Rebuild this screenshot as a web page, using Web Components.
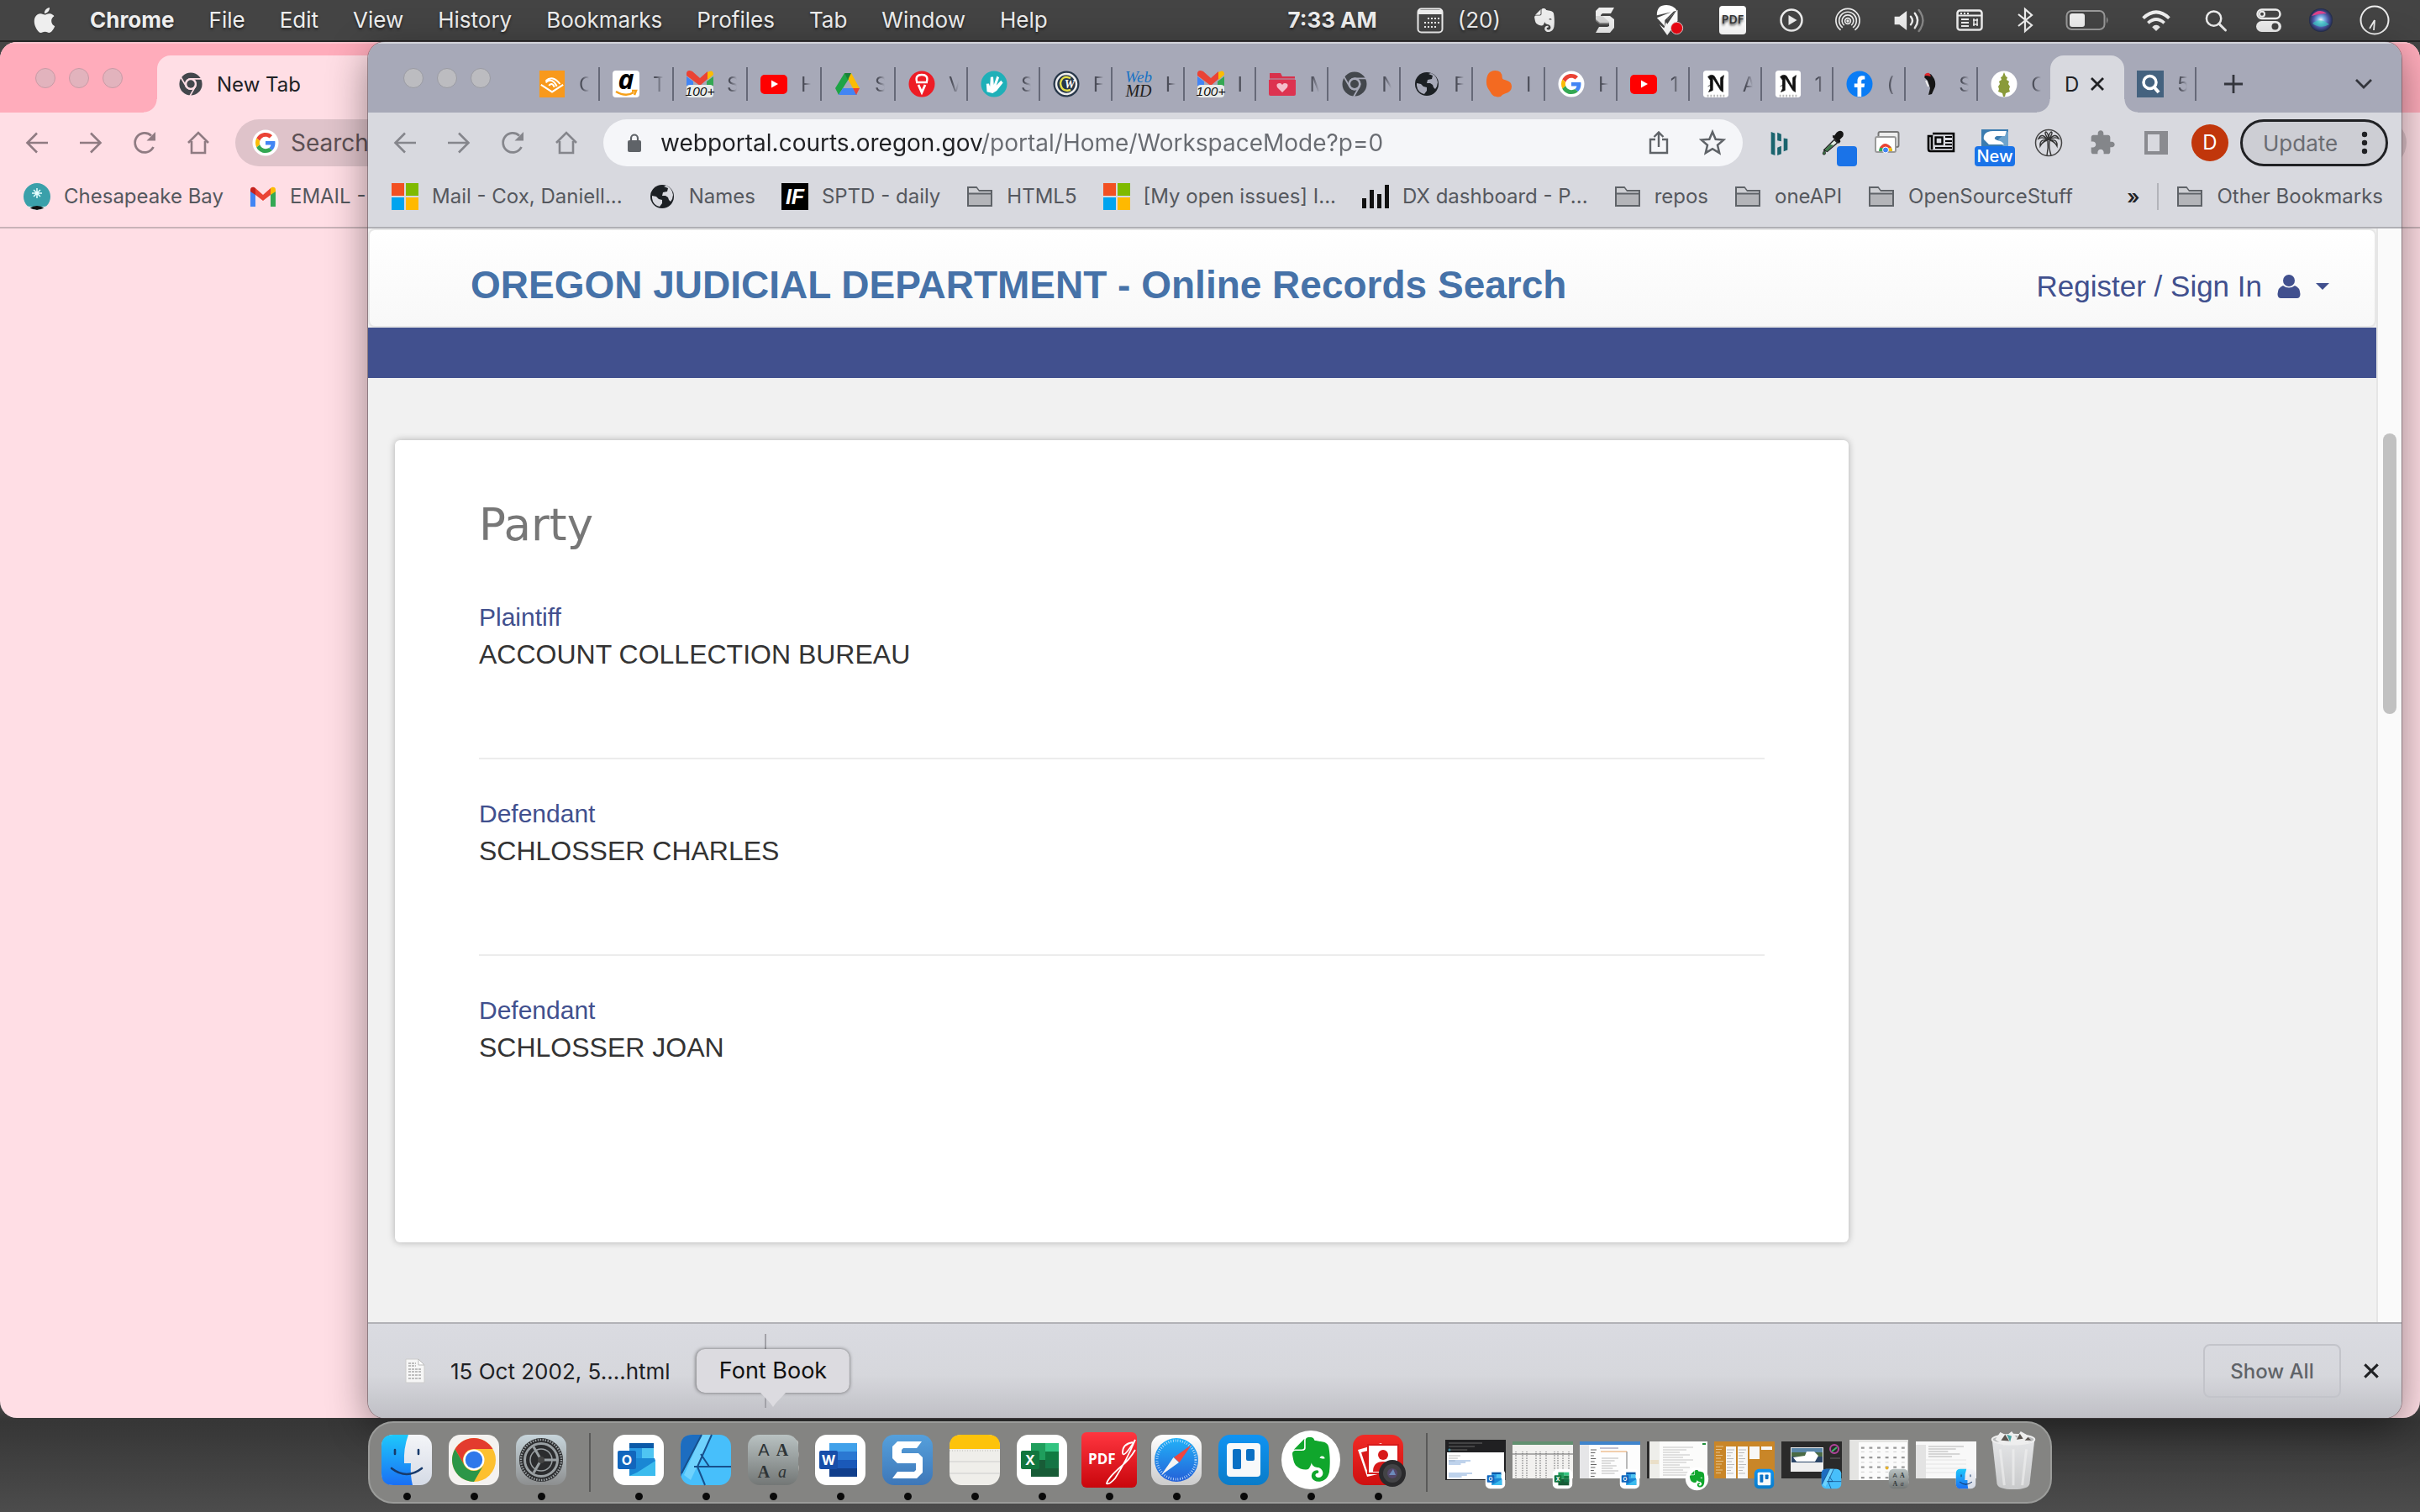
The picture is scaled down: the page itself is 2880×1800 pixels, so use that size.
<!DOCTYPE html>
<html lang="en">
<head>
<meta charset="utf-8">
<title>Online Records Search</title>
<style>
html,body{margin:0;height:100%;overflow:hidden;background:#444}
body{font-family:Inter,"Liberation Sans",sans-serif;font-size:24px;color:#202124}
</style>
</head>
<body>
<desk-top></desk-top>
<script>
const G = '<path fill="#EA4335" d="M24 9.5c3.54 0 6.71 1.22 9.21 3.6l6.85-6.85C35.9 2.38 30.47 0 24 0 14.62 0 6.51 5.38 2.56 13.22l7.98 6.19C12.43 13.72 17.74 9.5 24 9.5z"/><path fill="#4285F4" d="M46.98 24.55c0-1.57-.15-3.09-.38-4.55H24v9.02h12.94c-.58 2.96-2.26 5.48-4.78 7.18l7.73 6c4.51-4.18 7.09-10.36 7.09-17.65z"/><path fill="#FBBC05" d="M10.53 28.59c-.48-1.45-.76-2.99-.76-4.59s.27-3.14.76-4.59l-7.98-6.19C.92 16.46 0 20.12 0 24c0 3.88.92 7.54 2.56 10.78l7.97-6.19z"/><path fill="#34A853" d="M24 48c6.48 0 11.93-2.13 15.89-5.81l-7.73-6c-2.15 1.45-4.92 2.3-8.16 2.3-6.26 0-11.57-4.22-13.47-9.91l-7.98 6.19C6.51 42.62 14.62 48 24 48z"/>';
const ELEPHANT = '<path d="M8.222 5.393c0 .239-.02.637-.256.895-.257.24-.652.259-.888.259H4.552c-.73 0-1.165 0-1.46.04-.159.02-.356.1-.455.14-.04.019-.04 0-.02-.02L8.38.796c.02-.02.04-.02.02.02-.04.099-.118.298-.138.457-.04.298-.04.736-.04 1.472v2.647zm5.348 17.869c-.67-.438-1.026-1.015-1.164-1.373a2.924 2.924 0 01-.217-1.095 3.007 3.007 0 013-3.004c.493 0 .888.398.888.895a.88.88 0 01-.454.776c-.099.06-.237.1-.336.12-.098.02-.473.06-.65.218-.198.16-.356.418-.356.697 0 .298.118.577.316.776.355.358.829.557 1.342.557a2.436 2.436 0 002.427-2.447c0-1.214-.809-2.29-1.875-2.766-.158-.08-.414-.14-.651-.2a8.04 8.04 0 00-.592-.1c-.829-.1-2.901-.755-3.04-2.605 0 0-.611 2.785-1.835 3.54-.118.06-.276.12-.454.16-.177.04-.374.06-.434.06-1.993.12-4.105-.517-5.565-2.03 0 0-.987-.815-1.5-3.103-.118-.558-.355-1.553-.493-2.488-.06-.338-.08-.597-.099-.836 0-.975.592-1.631 1.342-1.73h4.026c.69 0 1.086-.18 1.342-.42.336-.317.415-.775.415-1.312V1.354C9.05.617 9.703 0 10.669 0h.474c.197 0 .434.02.651.04.158.02.296.06.533.12 1.204.298 1.46 1.532 1.46 1.532s2.27.398 3.415.597c1.085.199 3.77.378 4.282 3.104 1.204 6.487.474 12.775.415 12.775-.849 6.129-5.901 5.83-5.901 5.83a4.1 4.1 0 01-2.428-.736zm4.54-13.034c-.652-.06-1.204.2-1.402.697-.04.1-.079.219-.059.278.02.06.06.08.099.1.237.12.631.179 1.204.239.572.06.967.1 1.223.06.04 0 .08-.02.119-.08.04-.06.02-.18.02-.28-.06-.536-.553-.934-1.204-1.014z"/>';
const tile = f => `<rect x="2" y="2" width="60" height="60" rx="14" fill="${f}"/>`;
const grad = (id, a, b) => `<linearGradient id="${id}" x1="0" y1="0" x2="0" y2="1"><stop stop-color="${a}"/><stop offset="1" stop-color="${b}"/></linearGradient>`;
const M = '<path fill="#4285f4" d="M1 28V8l6 5v15z"/><path fill="#34a853" d="M31 28V8l-6 5v15z"/><path fill="#ea4335" d="M7 6l9 8 9-8v8l-9 7-9-7z"/><path fill="#c5221f" d="M1 8c0-4 4-4 6-2v8l-6-4z"/><path fill="#fbbc04" d="M31 8c0-4-4-4-6-2v8l6-4z"/>';
const chromeMono = c => `<g fill="none" stroke="${c}"><circle cx="16" cy="16" r="5" fill="${c}" stroke="none"/><circle cx="16" cy="16" r="11" stroke-width="7"/></g><g stroke="var(--hole,#fff)" stroke-width="1.8" fill="none"><circle cx="16" cy="16" r="6.6"/><path d="M16 9.4h14M10.3 19.3L3.5 7.5M21.7 19.3L15 31"/></g>`;
/* name: [viewBox, markup] */
const ICONS = {
 apple:['0 0 24 24','<path fill="#eee" d="M12.152 6.896c-.948 0-2.415-1.078-3.96-1.04-2.04.027-3.91 1.183-4.961 3.014-2.117 3.675-.546 9.103 1.519 12.09 1.013 1.454 2.208 3.09 3.792 3.039 1.52-.065 2.09-.987 3.935-.987 1.831 0 2.35.987 3.96.948 1.637-.026 2.676-1.48 3.676-2.948 1.156-1.688 1.636-3.325 1.662-3.415-.039-.013-3.182-1.221-3.22-4.857-.026-3.04 2.48-4.494 2.597-4.559-1.429-2.09-3.623-2.324-4.39-2.376-2-.156-3.675 1.09-4.61 1.09zM15.53 3.83c.843-1.012 1.4-2.427 1.245-3.83-1.207.052-2.662.805-3.532 1.818-.78.896-1.454 2.338-1.273 3.714 1.338.104 2.715-.688 3.559-1.701"/>'],
 cal:['0 0 32 32','<rect x="1.5" y="2.500" width="29" height="28" rx="4" fill="none" stroke="#eee" stroke-width="2"/><path fill="#eee" d="M2 4h28v5H2z"/><g fill="#eee"><path d="M13 13h2v2h-2zM17 13h2v2h-2zM21 13h2v2h-2zM25 13h2v2h-2zM9 18h2v2H9zM13 18h2v2h-2zM17 18h2v2h-2zM21 18h2v2h-2zM25 18h2v2h-2zM9 23h2v2H9zM13 23h2v2h-2zM17 23h2v2h-2zM21 23h2v2h-2z"/></g>'],
 elephant:['0 0 24 24','<g fill="#eee">'+ELEPHANT+'</g>'],
 snagS:['0 0 24 30','<path fill="#eee" d="M5 0h18l-4 7H9l-2 2v1h11l5 4v10l-5 6H1l4-7h10l2-1v-4H6l-5-4V4z"/><path fill="#bbb" d="M1 10h8l8 7v3H6l-5-4z" opacity=".5"/>'],
 bird:['0 0 34 38','<path d="M1 12Q1 0 13 0q9 0 13 7L1 13zM1 16l22-9L11 19v8z" fill="#fff"/><path d="M14 18L27 6v14L14 38 4 24l6 5z" fill="#fff"/><path d="M12 20L25 8 14 24z" fill="#444"/><circle cx="26" cy="29" r="7.500" fill="#f00814" stroke="#ddd"/>'],
 pdfM:['0 0 34 34','<rect x="1" y="0" width="32" height="34" rx="4" fill="#fff"/><text x="17" y="21" font-family="Open Sans" font-weight="600" font-size="14" text-anchor="middle" fill="#333">PDF</text>'],
 play:['0 0 28 28','<circle cx="14" cy="14" r="12.500" fill="none" stroke="#eee" stroke-width="2.500"/><path d="M10.500 8l10 6-10 6z" fill="#eee"/>'],
 airplay:['0 0 32 32','<g fill="none" stroke="#eee" stroke-width="1.800"><path d="M7 28.500a15 15 0 1 1 18 0M9.500 25.500a11 11 0 1 1 13 0M11.500 22.500a7.300 7.300 0 1 1 9 0"/><circle cx="16" cy="17" r="3.600"/></g><circle cx="16" cy="17" r="1.800" fill="#eee"/>'],
 speaker:['0 0 40 30','<path d="M1 10h6l9-7v24l-9-7H1z" fill="#eee"/><g fill="none" stroke="#eee" stroke-width="2.500" stroke-linecap="round"><path d="M21 10q4 5 0 10"/><path d="M26 6q7 9 0 18"/><path d="M31 2q10 13 0 26" stroke="#888"/></g>'],
 kbd:['0 0 32 28','<rect x="1.500" y="2.500" width="29" height="23" rx="3" fill="none" stroke="#eee" stroke-width="2.500"/><path d="M2 8.500h28" stroke="#eee" stroke-width="2"/><path d="M5 5h2v2H5zM9 5h2v2H9zM13 5h2v2h-2z" fill="#eee"/><path d="M6 13h9M6 17h9M6 21h9" stroke="#eee" stroke-width="2"/><path d="M20 14h6M20 19h6M21 12v9M25 12v9" stroke="#eee" stroke-width="1.500"/>'],
 bt:['0 0 20 28','<path d="M2 7l16 13-8 7V1l8 7L2 21" fill="none" stroke="#eee" stroke-width="2.200"/>'],
 battery:['0 0 52 26','<rect x="1.500" y="2" width="45" height="22" rx="6" fill="none" stroke="#999" stroke-width="2"/><rect x="5" y="5" width="18" height="16" rx="3" fill="#eee"/><path d="M49 9q3 4 0 8z" fill="#999"/>'],
 wifi:['0 0 36 28','<g fill="none" stroke="#eee" stroke-width="4"><path d="M2 11Q18-4 34 11"/><path d="M8 17q10-9 20 0"/></g><path d="M18 27l-5-5q5-5 10 0z" fill="#eee"/>'],
 search:['0 0 28 28','<circle cx="11.500" cy="11.500" r="9" fill="none" stroke="#eee" stroke-width="2.600"/><path d="M18 18l8 8" stroke="#eee" stroke-width="3" stroke-linecap="round"/>'],
 cc:['0 0 30 28','<rect x="1.500" y="1.500" width="27" height="10.500" rx="5.200" fill="none" stroke="#eee" stroke-width="2.500"/><circle cx="7" cy="6.700" r="3" fill="none" stroke="#eee" stroke-width="2"/><rect x="0" y="15" width="30" height="13" rx="6.500" fill="#eee"/><circle cx="22.500" cy="21.500" r="4" fill="#444"/>'],
 siri:['0 0 28 28','<radialGradient id="s"><stop stop-color="#fff"/><stop offset=".3" stop-color="#7fb4e8"/><stop offset=".65" stop-color="#4b57a6"/><stop offset="1" stop-color="#222b48"/></radialGradient><circle cx="14" cy="14" r="14" fill="url(#s)"/><path d="M3 9q8-10 18-3-8 0-18 3z" fill="#e0428c"/><path d="M4 18q9-8 20 1-10 6-20-1z" fill="#37d7c5" opacity=".6"/>'],
 clock:['0 0 36 36','<circle cx="18" cy="18" r="16.500" fill="none" stroke="#eee" stroke-width="2"/><path d="M18 18l-1 12M18 18l-6 10" stroke="#eee" stroke-width="1.800"/>'],
 back:['0 0 28 28','<path d="M27 14H3M14 2.500L2.500 14 14 25.500" fill="none" stroke="currentColor" stroke-width="2.600"/>'],
 fwd:['0 0 28 28','<path d="M1 14h24M14 2.500L25.500 14 14 25.500" fill="none" stroke="currentColor" stroke-width="2.600"/>'],
 reload:['0 0 28 28','<path d="M24.500 19A11.500 11.500 0 1 1 22 5.500" fill="none" stroke="currentColor" stroke-width="2.800"/><path d="M27 1v10.500H16.500z" fill="currentColor"/>'],
 home:['0 0 28 28','<path d="M2 14L14 2l12 12M6 12v14h16V12" fill="none" stroke="currentColor" stroke-width="2.600"/>'],
 lock:['0 0 18 22','<rect x="1" y="8" width="16" height="14" rx="2" fill="#5f6368"/><path d="M5 9V5.500a4 4 0 0 1 8 0V9" fill="none" stroke="#5f6368" stroke-width="2.200"/>'],
 share:['0 0 28 30','<path d="M10 11H4v16h20V11h-6M14 20V3M8.500 8L14 2.500 19.500 8" fill="none" stroke="#5f6368" stroke-width="2.400"/>'],
 star:['0 0 32 32','<path d="M16 3l3.700 8.800 9.500.8-7.200 6.200 2.200 9.300L16 23.100 7.800 28.100 10 18.800 2.800 12.600l9.500-.8z" fill="none" stroke="#5f6368" stroke-width="2.500"/>'],
 hext:['0 0 24 32','<path fill="#1a646e" d="M1 2l5 2v28l-5-2zM9 3l5 2v9l-5-1zM9 22l5-2v10l-5 2zM17 10l5 1v14l-5 2z"/>'],
 dropper:['0 0 32 32','<path d="M4 25L17 12l4 4L8 27z" fill="#dfe9df" stroke="#222" stroke-width="1.500"/><path d="M5 25l7-7 4 1-8 8z" fill="#3f7a4a"/><path d="M15 9l8 8 2-3-1-2 4-4q2-5-2-7-3-1-6 2l-3 4-2-1z" fill="#151515"/><path d="M4 26q-3 5 0 5t1-5z" fill="#3f7a4a" stroke="#222"/>'],
 photos:['0 0 32 32','<rect x="5.500" y="3" width="24" height="18" rx="2" fill="#eee" stroke="#777" stroke-width="2"/><rect x="2" y="9" width="24" height="18" rx="2" fill="#fff" stroke="#999" stroke-width="2"/><path d="M6 26a8 8 0 0 1 16 0z" fill="#34a853"/><path d="M7 22q6-10 14 0z" fill="#ea4335"/><path d="M16 22h5l1 4h-6z" fill="#fbbc05"/><circle cx="14" cy="24.500" r="3.500" fill="#4285f4" stroke="#fff"/>'],
 news:['0 0 34 26','<path d="M7 2h25v21H4q-2 0-2-3V5h4v16" fill="none" stroke="#000" stroke-width="2.600"/><rect x="10.500" y="6.500" width="8" height="8" fill="none" stroke="#000" stroke-width="2.400"/><path d="M22 6h8M22 11h8M22 15h8M10 19h20" stroke="#000" stroke-width="2.200"/>'],
 snagext:['0 0 32 32','<path fill="#3b7cb0" d="M0 0h32v20H0z"/><path fill="#6da3cc" d="M32 2L20 12l6 8h6z"/><path fill="#fff" d="M30 2H14C4 2 2 8 3 12l6 6h18q-2-4-8-5-6-2-1-5h10z"/>'],
 palm:['0 0 34 34','<circle cx="17" cy="17" r="15.500" fill="none" stroke="#444" stroke-width="1.500"/><g fill="none" stroke="#333" stroke-width="1.400"><path d="M15 32q2-9 1-17M20 32q-3-9-2-17M16 14Q9 4 5 12q6-3 11 2zM17 14Q25 4 29 12q-6-3-12 2zM16 14Q6 12 7 21q3-6 9-7zM18 14q10-2 9 7-3-6-9-7zM17 13Q11 5 14 4q3 2 3 9zM17 13q6-8 3-9-3 2-3 9z"/></g>'],
 puzzle:['0 0 24 24','<path fill="#84868a" d="M20.500 11H19V7c0-1.100-.9-2-2-2h-4V3.500C13 2.120 11.880 1 10.500 1S8 2.120 8 3.500V5H4c-1.100 0-1.990.9-1.990 2v3.800H3.500c1.490 0 2.700 1.210 2.700 2.700s-1.210 2.700-2.700 2.700H2V20c0 1.100.9 2 2 2h3.800v-1.500c0-1.490 1.210-2.700 2.700-2.700 1.490 0 2.700 1.210 2.700 2.700V22H17c1.100 0 2-.9 2-2v-4h1.500c1.380 0 2.500-1.120 2.500-2.500S21.880 11 20.500 11z"/>'],
 panel:['0 0 28 28','<path fill="#8a8b90" fill-rule="evenodd" d="M0 0h28v28H0zM4 4v20h14V4z"/>'],
 dots:['0 0 8 28','<g fill="#202124"><circle cx="4" cy="4" r="3.200"/><circle cx="4" cy="14" r="3.200"/><circle cx="4" cy="24" r="3.200"/></g>'],
 folder:['0 0 32 28','<path d="M2 25V3h10l3 4h15v18z" fill="#b4b5b9" stroke="#5f6368" stroke-width="2"/><path d="M3 6v4h26V8H15l-3-4H3z" fill="#cfd0d4"/><path d="M2 10.500h28" stroke="#5f6368" stroke-width="2"/>'],
 ms:['0 0 32 32','<path fill="#f25022" d="M0 0h15v15H0z"/><path fill="#7fba00" d="M17 0h15v15H17z"/><path fill="#00a4ef" d="M0 17h15v15H0z"/><path fill="#ffb900" d="M17 17h15v15H17z"/>'],
 ifb:['0 0 32 32','<path d="M0 0h32v32H0z"/><text x="16" y="25" font-family="Liberation Sans" font-weight="700" font-size="25" text-anchor="middle" fill="#fff">IF</text>'],
 bars:['0 0 32 32','<path d="M0 18h5v12H0zM9 8h5v22H9zM18 13h5v17h-5zM27 2h5v28h-5z" fill="#111"/>'],
 globe:['0 0 32 32','<circle cx="16" cy="16" r="14" fill="#1c2024"/><path d="M4 15l5 1 3 3 4 1v4l-3 4Q5 26 4 18zM18 4l5 2-1 4-5 1-1 4h4l3 2 1 3 2 2 2-3 1-5q-1-8-8-11z" fill="var(--hole,#d8d9df)"/>'],
 bay:['0 0 32 32','<clipPath id="b"><circle cx="16" cy="16" r="16"/></clipPath><g clip-path="url(#b)"><path fill="#3aa0aa" d="M0 0h32v32H0z"/><path fill="#fff" d="M0 26q16 6 32 0v6H0z"/><path d="M7 30q9-6 18 0l-9 2z" fill="#111"/></g><path d="M16 6v12M10 12h12M12 8l8 8M20 8l-8 8" stroke="#e6ffff" stroke-width="1.500"/>'],
 gmail:['0 0 32 32',M],
 gmail100:['0 0 32 32','<path fill="#4285f4" d="M0 18V7l8 6v5z"/><path fill="#34a853" d="M32 18V7l-8 6v5z"/><path fill="#ea4335" d="M0 3q1-5 7-2l9 8 9-8v9l-9 8L0 6z"/><path fill="#fbbc04" d="M32 5q0-6-5-4l-2 1v9z"/><rect y="17" width="32" height="15" rx="4" fill="#e8ecea"/><text x="16" y="30" font-family="Liberation Sans" font-size="15.500" text-anchor="middle" fill="#111">100+</text>'],
 chromeM:['0 0 32 32',chromeMono('#43474c')],
 audible:['0 0 32 34','<path fill="#f8991c" d="M0 0h32v34H0z"/><g fill="none" stroke="#fff" stroke-width="2.200"><path d="M2 18l14 9 14-9"/><path d="M8 15q8-7 14 5M12 19q4-5 7 2M8 13Q17 5 26 17"/></g>'],
 amazon:['0 0 32 32','<rect width="32" height="32" rx="4" fill="#fff"/><text x="16" y="22" font-family="Open Sans" font-weight="700" font-size="32" text-anchor="middle" fill="#000">a</text><path d="M4 25q12 7 21 1M23 24h5l-2 5" stroke="#f6a01a" stroke-width="2.500" fill="none"/>'],
 yt:['0 0 32 32','<rect y="5" width="32" height="23" rx="5" fill="#f00"/><path d="M13 11.500l8 4.500-8 4.500z" fill="#fff"/>'],
 drive:['0 0 32 32','<path d="M12 3h8l10 18h-8z" fill="#fbbc04"/><path d="M12 3L1 21l4 8 12-19z" fill="#1ea446"/><path d="M5 29l5-8h12l5 8z" fill="#4285f4"/><path d="M12 3h8l-4 8z" fill="#188038"/><path d="M30 21l-4 8-4-8z" fill="#ea4335"/>'],
 vred:['0 0 32 32','<circle cx="16" cy="16" r="15.500" fill="#ee1c25"/><path d="M10 13q-2-8 6-8t6 8M9 14h14" stroke="#fff" stroke-width="2.400" fill="none"/><path d="M12 17l4 9 4-9" stroke="#fff" stroke-width="2.800" fill="none"/>'],
 hand:['0 0 32 32','<circle cx="16" cy="16" r="15.500" fill="#1fb0b8"/><path d="M10 27l-3-9 3-1 2 3-2-11 3-1 3 9 1-11 3 1-1 10 4-7 3 2-5 11-4 4z" fill="#fff" transform="rotate(14 16 16)"/>'],
 cw:['0 0 32 32','<circle cx="16" cy="16" r="15.500" fill="#28384a"/><circle cx="16" cy="16" r="12" fill="none" stroke="#eee" stroke-width="2.500"/><path d="M21 9q-10-4-12 6 1 11 12 8" stroke="#e6e04a" stroke-width="2.500" fill="none"/><text x="20" y="21" font-family="Liberation Serif" font-weight="700" font-size="14" text-anchor="middle" fill="#fff">W</text>'],
 webmd:['0 0 32 32','<text x="16" y="14" font-family="Liberation Serif" font-style="italic" font-size="19" text-anchor="middle" fill="#1872c4">Web</text><text x="16" y="31" font-family="Liberation Serif" font-size="20" text-anchor="middle" fill="#222">MD</text>'],
 heart:['0 0 32 32','<path d="M1 3h13l2 4h15v7H1z" fill="#d8314b"/><path d="M0 11h32v17q0 2-2 2H2q-2 0-2-2z" fill="#dd3350"/><path d="M1 10h30" stroke="#a5a8b6"/><path d="M16 26l-6-6q-2-5 3-5 2 0 3 2 1-2 3-2 5 0 3 5z" fill="#f4bfcb"/>'],
 orange:['0 0 32 34','<path d="M11 0q9 0 9 9 0 2 4 3 8 2 8 8 0 7-8 9-4 1-6 4-9 2-13-6-5-6-5-12Q0 0 11 0z" fill="#f36a21"/>'],
 google:['-8 -8 64 64','<circle cx="24" cy="24" r="31" fill="#fff"/>'+G],
 nyt:['0 0 32 34','<rect width="32" height="34" rx="4" fill="#fff"/><path d="M6 8q4-4 8-1l8 14V9l4-3-1 6v15l-3-2L12 9v16l-5 2 2-4V12zM6 20l6-3" fill="#111" stroke="#111" stroke-width=".8"/><path d="M5 32h22" stroke="#bbb" stroke-dasharray="2 2" stroke-width="3"/>'],
 fb:['0 0 32 32','<circle cx="16" cy="16" r="15.500" fill="#0a7cf5"/><path d="M13.500 31V20H9.800v-4.500h3.700v-3.300c0-4 2.300-6 5.700-6 1.600 0 3.100.3 3.100.3v3.900h-1.800c-1.800 0-2.300 1-2.300 2.200v2.900h4l-.7 4.500h-3.300v11z" fill="#fff"/>'],
 wood:['0 0 32 32','<path d="M8 6q6-5 9 1 4 5 3 12l-4 9-4 1 2-8-3-9-4-4z" fill="#151515"/><path d="M7 6q2-4 6-3l2 4-5-1z" fill="#e02a30"/><path d="M9 12l3 7" stroke="#eee" stroke-width="2"/>'],
 tree:['0 0 32 32','<circle cx="16" cy="16" r="15.500" fill="#fff"/><path d="M16 2l2 5 2 1-1 3 3 2-1 3 2 3-1 3 1 3-5 2-1 4h-2l-1-4-5-2 1-3-1-3 2-3-1-3 3-2-1-3 2-1z" fill="#8a9a3a"/>'],
 qsearch:['0 0 32 32','<path fill="#44627f" d="M0 0h32v32H0z"/><circle cx="15.500" cy="14" r="7.500" fill="none" stroke="#fff" stroke-width="3.500"/><path d="M20 19l6 7" stroke="#fff" stroke-width="4"/>'],
 close:['0 0 20 20','<path d="M3 3l14 14M17 3L3 17" stroke="#202124" stroke-width="2.800"/>'],
 plus:['0 0 26 26','<path d="M13 1v24M1 13h24" stroke="#33353c" stroke-width="3"/>'],
 chev:['0 0 22 22','<path d="M2 6l9 9 9-9" fill="none" stroke="#33353c" stroke-width="2.800"/>'],
 user:['0 0 28 28','<circle cx="14" cy="7" r="7" fill="#41508e"/><path d="M7 13q7 5 14 0 6 2 6.500 10 0 5-4 5h-19q-4 0-4-5Q1 15 7 13z" fill="#41508e"/>'],
 caret:['0 0 16 8','<path d="M0 0h16L8 8z" fill="#41508e"/>'],
 doc:['0 0 24 30','<path d="M1 1h15l7 7v21H1z" fill="#f6f6f6" stroke="#ccc"/><path d="M16 1v7h7z" fill="#fff" stroke="#bbb"/><path d="M4 6h9M4 9h9M4 13h15M4 16h15M4 20h15M4 24h15" stroke="#aaa" stroke-width="1.500" stroke-dasharray="3 1"/>'],
 finder:['0 0 64 64',grad('f','#1ec8fb','#1a6ff4')+grad('g','#f4f5f8','#d5dbe6')+tile('url(#g)')+'<path d="M16 2h18q-6 16-5 34h8q-1 14 2 26H16Q2 62 2 48V16Q2 2 16 2z" fill="url(#f)"/><path d="M14 42q18 14 36 0" fill="none" stroke="#173a6b" stroke-width="2.600" stroke-linecap="round"/><path d="M18 20v5M46 20v5" stroke="#173a6b" stroke-width="2.600" stroke-linecap="round"/>'],
 chrome:['0 0 64 64',tile('#f4f2f0')+'<circle cx="32" cy="32" r="26" fill="#fdc02f"/><path d="M9.500 19A26 26 0 0 1 54.500 19H32a13 13 0 0 0-11.300 19.500z" fill="#e33b2e"/><path d="M9.500 19l11.200 19.500A13 13 0 0 0 43.300 38.500L32 58A26 26 0 0 1 9.500 19z" fill="#2b9648"/><circle cx="32" cy="32" r="12.500" fill="#fff"/><circle cx="32" cy="32" r="10.200" fill="#2f78ea"/>'],
 prefs:['0 0 64 64',grad('p','#c7d5db','#8d8f90')+tile('url(#p)')+'<circle cx="32" cy="32" r="26" fill="#2b2c2e"/><g fill="none" stroke="#9aa0a3"><circle cx="32" cy="32" r="24" stroke-width="2.500" stroke-dasharray="1.500 1.500"/><circle cx="32" cy="32" r="19.500" stroke-width="3"/><circle cx="32" cy="32" r="13" stroke-width="1.500"/><path d="M32 32h18M32 32L23 16.500M32 32l-9 15.500" stroke-width="3"/></g><circle cx="32" cy="32" r="4" fill="#444"/>'],
 outlook:['0 0 64 64',tile('#fff')+'<path fill="#0b5aa8" d="M21 12h29v8H21z"/><path fill="#2a9be4" d="M21 18h15v12H21z"/><path fill="#4fc5f2" d="M36 18h14v13H36z"/><path d="M21 30h30l1 3v18H21z" fill="#1a87d4"/><path d="M52 33L30 47l-9 4h31z" fill="#3cbcee"/><rect x="7" y="21" width="22" height="22" rx="2" fill="#1266bd"/><text x="18" y="38" font-family="Inter" font-weight="700" font-size="16" text-anchor="middle" fill="#fff">O</text>'],
 affinity:['0 0 64 64',tile('#47bffb')+'<path d="M16 2h11L2 52V16Q2 2 16 2z" fill="#1d6dc0"/><path d="M27 2h12L14 56 6 50z" fill="#6fd2fd"/><g stroke="#17508c" stroke-width="2" fill="none"><path d="M27 2L3 48M39 2L22 40h40M22 40l9 22M18 40h18L26 25"/></g>'],
 fontbook:['0 0 64 64',grad('a','#b9c2c2','#737776')+'<path d="M58 8q5 0 4 6t0 8 0 8 0 8 0 8-4 8z" fill="#c8c8c4"/>'+tile('url(#a)')+'<g fill="#2e3436" font-size="20" text-anchor="middle"><text x="21" y="27" font-family="Liberation Sans">A</text><text x="43" y="27" font-family="Liberation Serif" font-weight="700">A</text><text x="21" y="53" font-family="Liberation Serif" font-weight="700">A</text><text x="43" y="53" font-family="Liberation Serif" font-style="italic">a</text></g>'],
 word:['0 0 64 64',tile('#fff')+'<path fill="#41a1ea" d="M19 12h33v10H19z"/><path fill="#2b78d2" d="M19 22h33v10H19z"/><path fill="#1a59b9" d="M19 32h33v10H19z"/><path fill="#113f8c" d="M19 42h33v10H19z"/><rect x="7" y="21" width="22" height="22" rx="2" fill="#174ea9"/><text x="18" y="38" font-family="Inter" font-weight="700" font-size="16" text-anchor="middle" fill="#fff">W</text>'],
 snag:['0 0 64 64',grad('n','#55a0dc','#3e77b8')+tile('url(#n)')+'<path d="M20 10h29l-6 8H27l-2 2v4h20l5 5v18l-7 7H14l6-8h20l2-2v-8H20l-6-6V16z" fill="#fff"/>'],
 notes:['0 0 64 64',tile('#efeeea')+'<path d="M2 19v-3Q2 2 16 2h32q14 0 14 14v3z" fill="#fdc30b"/><path d="M2 21h60" stroke="#bbb" stroke-dasharray="1 2"/><path d="M2 34h60M2 48h60" stroke="#ccc"/>'],
 excel:['0 0 64 64',tile('#fff')+'<path fill="#1f9e5c" d="M19 12h17v20H19z"/><path fill="#33c481" d="M36 12h16v10H36z"/><path fill="#107c41" d="M36 22h16v10H36z"/><path fill="#185c37" d="M19 32h33v20H19z"/><path fill="#157345" d="M36 32h16v10H36z"/><rect x="7" y="21" width="22" height="22" rx="2" fill="#11763e"/><text x="18" y="38" font-family="Inter" font-weight="700" font-size="16" text-anchor="middle" fill="#fff">X</text>'],
 pdf:['0 0 64 64',grad('r','#ff3640','#c9060c')+'<rect x="-1" y="-1" width="66" height="66" rx="6" fill="url(#r)"/><text x="7" y="37" font-family="Open Sans" font-weight="700" font-size="17" fill="#fff">PDF</text><path d="M60 11q-12 2-12 12 0 6 7-3 5-6 8-12-10 24-24 46-7 8-10 6 2-7 17-20 10-8 17-20" fill="none" stroke="#fff" stroke-width="1.800"/>'],
 safari:['0 0 64 64',grad('q','#fff','#ccc')+grad('w','#22b2f8','#2460d8')+tile('url(#q)')+'<circle cx="32" cy="32" r="26" fill="url(#w)"/><circle cx="32" cy="32" r="23" fill="none" stroke="#cfe6fa" stroke-width="3" stroke-dasharray=".8 2"/><path d="M50 14L35.500 35 29 29z" fill="#f0453f"/><path d="M14 50l14.500-21 6.500 6z" fill="#f4f4f4"/>'],
 trello:['0 0 64 64',grad('t','#1093f2','#0a7cc9')+tile('url(#t)')+'<rect x="12" y="12" width="40" height="40" rx="4" fill="#f8f9fa"/><rect x="19" y="19" width="10" height="24" rx="2" fill="#0a70c4"/><rect x="35" y="19" width="10" height="14" rx="2" fill="#0a70c4"/>'],
 evernote:['0 0 64 64','<circle cx="32" cy="32" r="35" fill="#fff"/><g fill="#10a62c" transform="translate(6 5) scale(2.200)">'+ELEPHANT+'</g>'],
 booth:['0 0 64 64',grad('h','#f02b26','#cf1010')+tile('url(#h)')+'<path d="M8 20l28-8 8 34-25 6z" fill="#fff"/><path d="M12 23l8-2v27z" fill="#d81a1a"/><rect x="20" y="14" width="36" height="34" fill="#fff" stroke="#d81a1a" stroke-width="2"/><circle cx="38" cy="26" r="6" fill="#d81a1a"/><path d="M26 46q0-12 12-12t12 12z" fill="#d81a1a"/><circle cx="49" cy="48" r="16" fill="#2a2a2c"/><circle cx="49" cy="48" r="11" fill="#434346"/><circle cx="49" cy="48" r="6" fill="#54486a"/><path d="M45 50l5-7 3 7z" fill="#6d8bbb"/>'],
 trash:['0 0 56 74',grad('z','#e4e5e7','#c9cacb')+'<path d="M2 12h52l-6 54q-1 7-20 7T8 66z" fill="url(#z)"/><ellipse cx="28" cy="12" rx="26" ry="6" fill="#b9babb" stroke="#eee" stroke-width="2"/><path d="M6 12l6-9 8 4 6-5 6 8 5-8 7 4 6 8-12 4-22 1z" fill="#eee"/><path d="M13 13l5-7 5 8zM32 12l4-7 4 6zM42 13l4-4 4 4z" fill="#5b5550"/><path d="M20 6l6 2-2 7z" fill="#44a0a0"/><path d="M12 24l5 44M28 24v44M44 24l-5 44" stroke="#f2f2f2" stroke-width="3" opacity=".6"/>'],
};
const lines = (x,y,w,n,s,c) => Array.from({length:n},(_,i)=>`<path d="M${x} ${y+i*s}h${w-(i*7%5)*w/9}" stroke="${c}"/>`).join('');
Object.assign(ICONS,{
 t1:['0 0 72 48','<path fill="#202022" d="M0 0h72v48H0z"/><path fill="#fff" d="M2 15h68v32H2z"/><circle cx="5" cy="12" r="1.500" fill="#2aa5c8"/>'+lines(4,4,40,3,4,'#666')+lines(4,19,14,3,3,'#bbb')+lines(4,25,26,3,2,'#7fa6d8')+lines(4,40,28,3,2,'#7fa6d8')],
 t2:['0 0 72 44','<path fill="#f2f1ef" d="M0 0h72v44H0z"/><path fill="#62906f" d="M0 0h72v4H0z"/>'+[4,12,17,28,33,40,50,54,60,67].map(x=>`<path d="M${x} 12v31" stroke="#aaa" stroke-width="2" stroke-dasharray="1 1"/>`).join('')+'<path d="M0 15h72" stroke="#666"/>'],
 t3:['0 0 72 44','<path fill="#fdfdfd" d="M0 0h72v44H0z"/><path fill="#3f84cc" d="M0 0h72v4H0z"/><path fill="#e6e6e8" d="M0 4h11v40H0z"/>'+lines(13,10,7,10,3.5,'#666')+lines(26,20,20,7,3,'#bbb')+'<path d="M56 12v32" stroke="#777"/><path d="M25 12h31" stroke="#e7a05c"/><path d="M24 8h22" stroke="#88a"/>'],
 t4:['0 0 72 44','<path fill="#fcfcfb" d="M0 0h72v44H0z"/><path fill="#2a2a2a" d="M0 0h3v44H0z"/><path fill="#eeeeea" d="M3 0h12v44H3z"/><path fill="#eadfc8" d="M4 22h10v5H4z"/><path fill="#1f8f3a" d="M66 2h4v2h-4z"/>'+lines(19,7,36,12,3,'#c4c4c4')],
 t5:['0 0 72 44','<path fill="#c98628" d="M0 0h72v44H0z"/><path fill="#f7f7f7" d="M14 6h12v38H14zM28 6h12v38H28zM42 6h12v15H42zM56 6h13v4H56z"/>'+lines(2,6,9,10,3.500,'#e6c48e')+lines(15,10,9,9,3.500,'#bbb')+lines(29,10,9,9,3.500,'#bbb')],
 t6:['0 0 72 44','<path fill="#2a2a2a" d="M0 0h72v44H0z"/><path fill="#efefef" d="M11 7h39v29H11z"/><path fill="#5a86a8" d="M12 8h37v7H12z"/><path fill="#4a6a44" d="M12 13h37v5H12z"/><path fill="#2b4668" d="M12 18h37v7H12z"/><path fill="#fff" d="M14 19l14-2 2-5h9l5 5-4 7H18z"/><circle cx="63" cy="9" r="5" fill="none" stroke="#b2449b" stroke-width="2"/><path d="M60 12l6-5" stroke="#3fb56a" stroke-width="2"/><path d="M58 20h12" stroke="#666"/>'],
 t7:['0 0 72 50','<path fill="#fbfbfb" d="M0 0h72v50H0z"/><path fill="#e4e4e2" d="M0 0h11v50H0zM11 0h61v3H11z"/><g stroke="#999" stroke-width="2.500" stroke-dasharray="4 6"><path d="M14 10h56M14 22h56M14 34h56M14 47h56"/></g><g stroke="#ccc" stroke-dasharray="4 6"><path d="M14 15h56M14 28h56M14 40h56"/></g><circle cx="46" cy="35" r="2" fill="#e8b32e"/>'],
 t8:['0 0 72 44','<path fill="#f8f8f8" d="M0 0h72v44H0z"/><path fill="#e3e3e3" d="M0 4h12v40H0z"/>'+lines(15,6,42,5,3,'#b5b5b5')+'<path d="M12 22h48M12 27h48M12 32h48M12 37h48" stroke="#e4e4e4"/>'],
});

const define = (name, html, setup) => {
  const t = document.createElement('template');
  t.innerHTML = html;
  customElements.define(name, class extends HTMLElement {
    constructor(){ super(); this.attachShadow({mode:'open'}).append(t.content.cloneNode(true)); }
    connectedCallback(){ if (setup && !this.ready) { this.ready = true; setup.call(this, this.shadowRoot); } }
  });
};
const icon = (n, w = 32, h = w) => `<ui-icon name="${n}" w="${w}" h="${h}"></ui-icon>`;

define('ui-icon','<style>:host{display:block;flex:none}svg{display:block;width:100%;height:100%;overflow:visible}</style>',function(r){
  const [vb, body] = ICONS[this.getAttribute('name')];
  const w = this.getAttribute('w') || 32, h = this.getAttribute('h') || w;
  this.style.width = w+'px'; this.style.height = h+'px';
  r.innerHTML += `<svg viewBox="${vb}" aria-hidden="true">${body}</svg>`;
});

define('icon-button',`<style>:host{display:flex;flex:none;width:64px;justify-content:center}
button{all:unset;display:flex;align-items:center;justify-content:center;position:relative;width:56px;height:56px;cursor:pointer}
</style><button><slot></slot></button>`,function(r){r.querySelector('button').setAttribute('aria-label',this.getAttribute('label')||'')});

define('menu-bar',`<style>
:host{display:flex;align-items:center;height:48px;padding:0 36px 0 40px;background:#444;border-bottom:2px solid #262626;color:#eee;font-size:26px;line-height:32px;text-shadow:0 2px 3px #222;box-sizing:content-box}
nav,.status{display:flex;align-items:center}
nav{gap:41px}.status{margin-left:auto;gap:32px}
button{all:unset;white-space:nowrap}
b,time{font-weight:700}
time{margin-right:14px;white-space:nowrap}
.cal{display:flex;gap:16px;align-items:center;margin-right:6px}
nav ui-icon{margin:0 -2px}
</style>
<nav>${icon('apple',30)}<button><b>Chrome</b></button><button>File</button><button>Edit</button><button>View</button><button>History</button><button>Bookmarks</button><button>Profiles</button><button>Tab</button><button>Window</button><button>Help</button></nav>
<div class="status"><time>7:33 AM</time><span class="cal">${icon('cal',34,32)}<span>(20)</span></span>
${icon('elephant',28,34)}${icon('snagS',52,30)}${icon('bird',38,36)}${icon('pdfM',48,34)}${icon('play',28)}${icon('airplay',42,30)}${icon('speaker',42,29)}${icon('kbd',36,28)}${icon('bt',32,28)}${icon('battery',52,26)}${icon('wifi',48,27)}${icon('search',30,27)}${icon('cc',32,28)}${icon('siri',28)}${icon('clock',36)}</div>`);

define('browser-window',`<style>
:host{display:flex;flex-direction:column;box-sizing:border-box;border-radius:20px;overflow:hidden;background:var(--bar)}
.strip{display:flex;align-items:stretch;height:84px;background:var(--strip);box-shadow:inset 0 2px 0 var(--edge);box-sizing:border-box}
.lights{display:flex;gap:16px;align-items:center;padding:2px 0 0 42px}
.lights i{width:22px;height:22px;border-radius:50%;background:var(--light);border:1px solid var(--ring)}
.tools{display:flex;align-items:center;height:72px;padding:0 16px 0 12px}
.marks{display:flex;align-items:center;padding:0 22px 8px 28px;box-sizing:border-box;gap:31px;border-bottom:2px solid var(--line);height:66px;color:#55585e}
.body{flex:1;min-height:0;display:flex;flex-direction:column}
icon-button{color:var(--nav)}
</style>
<div class="strip"><div class="lights"><i></i><i></i><i></i></div><slot name="tabs"></slot></div>
<div class="tools"><icon-button label="Back">${icon('back',28)}</icon-button><icon-button label="Forward">${icon('fwd',28)}</icon-button><icon-button label="Reload">${icon('reload',28)}</icon-button><icon-button label="Home">${icon('home',28)}</icon-button><slot name="tools"></slot></div>
<div class="marks"><slot name="marks"></slot></div>
<div class="body"><slot></slot></div>`);

define('mini-tab',`<style>
:host{display:flex;flex:1 1 0;min-width:0;align-items:center;padding-top:16px;--hole:#a7a9b8}
:host([last]){flex:none;width:86px}
:host([wide]){flex:none;width:88px}
button{all:unset;display:flex;align-items:center;gap:16px;height:40px;flex:1;padding-left:15px;border-right:2px solid #666978;box-sizing:border-box}
:host([nosep]) button{border-color:transparent}
span{width:12px;overflow:hidden;white-space:nowrap;color:#4c4e59;-webkit-mask:linear-gradient(90deg,#000 30%,transparent)}
.pic{display:contents}
</style><button><i class="pic"></i><span><slot></slot></span></button>`,function(r){
  r.querySelector('.pic').innerHTML=icon(this.getAttribute('icon'));
});

define('big-tab',`<style>
:host{display:flex;align-items:center;align-self:flex-end;position:relative;height:68px;background:var(--bar);border-radius:16px 16px 0 0;box-sizing:border-box;white-space:nowrap;color:#202124}
:host::before,:host::after{content:"";position:absolute;bottom:0;width:16px;height:16px}
:host::before{left:-16px;background:radial-gradient(circle at 0 0,transparent 15px,var(--bar) 16px)}
:host::after{right:-16px;background:radial-gradient(circle at 100% 0,transparent 15px,var(--bar) 16px)}
</style><slot></slot>`);

define('omni-box',`<style>
:host{display:flex;align-items:center;flex:1;min-width:0;height:56px;margin-left:12px;border-radius:28px;background:var(--omni,#f5f6f9);padding:0 4px 0 28px;box-sizing:border-box}
input{flex:1;min-width:0;height:48px;border:0;outline:0;padding:0;margin-left:22px;font:28px Inter,sans-serif;background:transparent;color:var(--ink,#202124)}
:host([host]) input{background:linear-gradient(90deg,#202124 var(--host-end),#696c72 var(--host-end));-webkit-background-clip:text;background-clip:text;-webkit-text-fill-color:transparent}
</style><slot name="lead"></slot><input type="text"><slot></slot>`,function(r){
  const i=r.querySelector('input'),host=this.getAttribute('host');
  i.value=this.getAttribute('value');i.setAttribute('aria-label','Address and search bar');
  if(host){
    const c=document.createElement('canvas').getContext('2d');c.font='28px Inter, sans-serif';
    this.style.setProperty('--host-end',Math.round(c.measureText(host).width)+'px');
  }
});

define('book-mark',`<style>:host{display:block;flex:none}
a{display:flex;align-items:center;gap:16px;color:inherit;text-decoration:none;white-space:nowrap;line-height:32px}.pic{display:contents}</style>
<a href="#"><i class="pic"></i><span></span></a>`,function(r){
  const n=this.getAttribute('icon');
  r.querySelector('.pic').innerHTML=icon(n,32,n=='folder'?28:32);
  r.querySelector('span').textContent=this.getAttribute('label');
});

define('party-entry',`<style>
:host{display:block;padding:43px 0 101px;line-height:44px;border-bottom:2px solid #ececec;font-family:"Liberation Sans",Arial,sans-serif}
:host(:last-of-type){border-bottom:0}
dt{font-size:30px;color:#41508e}dd{margin:0;font-size:32px;color:#333}dl{margin:0}
</style><dl><dt><slot name="role"></slot></dt><dd><slot></slot></dd></dl>`);

define('portal-page',`<style>
:host{display:flex;flex:1;min-height:0;font-family:"Liberation Sans",Arial,sans-serif}
main{flex:1;background:#f1f1f1;min-width:0}
header{display:flex;align-items:center;justify-content:space-between;border:2px solid #e7e7e7;border-radius:8px;padding:16px 54px 0 120px;height:98px;background:linear-gradient(#fff,#f8f8f8)}
h1{margin:0;font-size:46px;line-height:56px;color:#4672a8;white-space:nowrap}
.sign{all:unset;display:flex;align-items:center;font-size:35px;line-height:52px;padding-top:4px;color:#41508e;white-space:nowrap}
.sign ui-icon{margin-left:18px}
.band{height:60px;background:#41508e}
section{margin:74px 628px 0 32px;background:#fff;border-radius:6px;box-shadow:0 0 8px rgba(0,0,0,.28);padding:62px 100px 109px}
h2{margin:0 0 6px;font:400 53px/78px "DejaVu Sans",Verdana,sans-serif;color:#777}
.scroll{width:30px;background:#fafafa;border-left:2px solid #e6e6e6;display:flex;justify-content:center;padding-top:244px;box-sizing:border-box}
.scroll i{width:16px;height:334px;border-radius:8px;background:#c1c1c1}
</style>
<main><header><h1>OREGON JUDICIAL DEPARTMENT - Online Records Search</h1><button class="sign">Register / Sign In${icon('user',28)}${icon('caret',16,8)}</button></header>
<div class="band"></div>
<section><h2>Party</h2>
<party-entry><span slot="role">Plaintiff</span>ACCOUNT COLLECTION BUREAU</party-entry>
<party-entry><span slot="role">Defendant</span>SCHLOSSER CHARLES</party-entry>
<party-entry><span slot="role">Defendant</span>SCHLOSSER JOAN</party-entry>
</section></main><div class="scroll"><i></i></div>`);

define('download-shelf',`<style>
:host{display:flex;align-items:center;height:112px;border-top:2px solid #b2b2b6;background:linear-gradient(#dadbe1 0,#d6d7dc 55%,#bfbfc5 100%);padding:0 4px 0 44px;font-size:26px}
.item{all:unset;display:flex;align-items:center;gap:30px;white-space:nowrap}
.rule{width:2px;height:88px;background:#a2a2a8;margin-left:112px}
.all{margin-left:auto;width:164px;height:64px;border:2px solid #c3c4ca;border-radius:8px;background:transparent;font:500 24px Inter,sans-serif;color:#5f6368;padding:0;margin-right:4px;white-space:nowrap}
</style>
<button class="item">${icon('doc',24,30)}15 Oct 2002, 5....html</button><span class="rule"></span><button class="all">Show All</button><icon-button label="Close">${icon('close',22)}</icon-button>`);

define('dock-app',`<style>
:host{display:flex;flex:none;position:relative;width:80px;flex-direction:column;align-items:center;padding-top:12px;box-sizing:border-box}
button{all:unset;display:flex;align-items:center;justify-content:center;height:64px}
i{width:9px;height:9px;border-radius:50%;background:#0a0a0a;margin-top:7px}
:host([closed]) i{display:none}
::slotted(.tip){position:absolute;top:-88px;left:50%;transform:translateX(-50%);background:#dcdbe0;border-radius:10px;box-shadow:0 0 4px rgba(0,0,0,.5);color:#111;font-size:27px;line-height:52px;padding:0 27px;white-space:nowrap}
.tail{display:none}
:host([tip]) .tail{display:block;position:absolute;top:-36px;left:50%;margin-left:-15px;width:30px;height:17px;background:#dcdbe0;clip-path:polygon(0 0,100% 0,60% 75%,50% 100%,40% 75%)}
</style><button></button><i></i><slot></slot><span class="tail"></span>`,function(r){
  const n=this.getAttribute('icon'),b=r.querySelector('button'),bin=n=='trash';
  b.innerHTML=icon(n,bin?56:64,bin?72:64);b.setAttribute('aria-label',n);
});

define('dock-shot',`<style>
:host{display:flex;flex:none;position:relative;width:80px;flex-direction:column;align-items:center;padding-top:12px;box-sizing:border-box}
button{all:unset;display:flex;align-items:center;justify-content:center;height:64px}
.badge{position:absolute;right:4px;top:54px}
</style><button></button><span class="badge"></span>`,function(r){
  const n=this.getAttribute('shot'),h={t1:48,t7:48}[n]||44,b=this.getAttribute('app');
  const btn=r.querySelector('button');btn.setAttribute('aria-label',b+' window');
  btn.innerHTML=icon(n,72,h);
  r.querySelector('.badge').innerHTML=icon(b,25);
});

define('mac-dock',`<style>
:host{display:flex;height:94px;padding:0 4px;border:2px solid #9b9c9a;border-radius:30px;background:#848482}
.sep{width:36px;display:flex;justify-content:center;align-items:center}
.sep::before{content:"";width:2px;height:70px;background:#5a5a59}
.tip{display:block}
</style>
<dock-app icon="finder"></dock-app><dock-app icon="chrome"></dock-app><dock-app icon="prefs"></dock-app><span class="sep"></span>
<dock-app icon="outlook"></dock-app><dock-app icon="affinity"></dock-app><dock-app icon="fontbook" tip><span class="tip">Font Book</span></dock-app><dock-app icon="word"></dock-app><dock-app icon="snag"></dock-app><dock-app icon="notes"></dock-app><dock-app icon="excel"></dock-app><dock-app icon="pdf"></dock-app><dock-app icon="safari"></dock-app><dock-app icon="trello"></dock-app><dock-app icon="evernote"></dock-app><dock-app icon="booth"></dock-app><span class="sep"></span>
<dock-shot shot="t1" app="outlook"></dock-shot><dock-shot shot="t2" app="excel"></dock-shot><dock-shot shot="t3" app="outlook"></dock-shot><dock-shot shot="t4" app="evernote"></dock-shot><dock-shot shot="t5" app="trello"></dock-shot><dock-shot shot="t6" app="affinity"></dock-shot><dock-shot shot="t7" app="fontbook"></dock-shot><dock-shot shot="t8" app="finder"></dock-shot>
<dock-app icon="trash" closed></dock-app>`);

const tabs = [['audible','C'],['amazon','T'],['gmail100','S'],['yt','H'],['drive','S'],['vred','V'],['hand','S'],['cw','F'],['webmd','H'],['gmail100','I'],['heart','M'],['chromeM','N'],['globe','F'],['orange','I'],['google','H'],['yt','1'],['nyt','A'],['nyt','1'],['fb','('],['wood','S'],['tree','C']];
const marks = [['ms','Mail - Cox, Daniell...'],['globe','Names'],['ifb','SPTD - daily'],['folder','HTML5'],['ms','[My open issues] I...'],['bars','DX dashboard - P...'],['folder','repos'],['folder','oneAPI'],['folder','OpenSourceStuff']];
const mark = ([i,l]) => `<book-mark slot="marks" icon="${i}" label="${l}"></book-mark>`;
define('desk-top',`<style>
:host{display:flex;flex-direction:column;position:relative;height:100vh;background:linear-gradient(#444 0,#444 93%,#363636 94%,#4c4c4c 100%);overflow:hidden}
.space{flex:1;position:relative;min-height:0}
.rear,.front{position:absolute;top:0;bottom:112px}
.rear{left:0;right:0;--bar:#ffdee5;--strip:#ffacbb;--edge:#ffc3cd;--light:#e2b3bd;--ring:#c99aa5;--line:#c9b3b8;--nav:#8f7b82;--omni:#dfc3ca;--ink:#5c4f53;--hole:#ffdee5}
.front{left:438px;right:22px;--bar:#d8d9df;--strip:#a7a9b8;--edge:#d3d4da;--light:#bcbcc0;--ring:#9a9ba3;--line:#b0b0b5;--nav:#85868c;box-shadow:0 0 0 1px rgba(80,70,75,.5),0 12px 48px rgba(0,0,0,.42)}
.tabs{display:flex;flex:1;min-width:0;align-items:stretch;padding-left:42px}
.rest{display:flex;flex:1;align-items:center;justify-content:space-between;padding:16px 34px 0 32px}
.run{display:flex;flex:1;min-width:0}
.end{display:flex;flex:none;width:418px}
.act{width:88px;justify-content:space-between;padding:0 22px 0 17px}
.ntab{width:300px;margin-left:41px;padding-left:25px;gap:16px}
.avatar{width:44px;height:44px;border-radius:50%;background:#c1360b;color:#fff;font-size:24px;line-height:44px;text-align:center}
.update{display:flex;align-items:center;justify-content:space-between;width:176px;height:56px;margin-left:4px;border:3px solid #202124;border-radius:28px;background:#cdced4;padding:0 21px 0 24px;font:26px Inter,sans-serif;color:#6a6c72;box-sizing:border-box}
.badge{position:absolute;background:#1a73e8;border-radius:4px;color:#fff;height:24px}
.new{left:4px;right:4px;bottom:0;font:500 20px/24px Inter,sans-serif;text-align:center}
.dot{width:24px;right:0;bottom:0}
.gap{width:12px}
.more{margin-left:auto;font-weight:600;color:#202124}
.rule{width:2px;height:32px;background:#b3b4ba;margin:0 -10px}
mac-dock{position:absolute;bottom:10px;left:50%;transform:translateX(-50%)}
</style>
<menu-bar></menu-bar>
<div class="space">
<browser-window class="rear"><big-tab slot="tabs" class="ntab">${icon('chromeM',30)}<span>New Tab</span></big-tab>
<omni-box slot="tools" value="Search Google or type a URL"><ui-icon slot="lead" name="google" w="32" style="margin:0 -8px"></ui-icon></omni-box>
${mark(['bay','Chesapeake Bay'])}${mark(['gmail','EMAIL -'])}
</browser-window>
<browser-window class="front">
<div class="tabs" slot="tabs"><div class="run">${tabs.map(([i,t],n)=>`<mini-tab icon="${i}"${n<5?' wide':''}${n==20?' nosep':''}>${t}</mini-tab>`).join('')}</div>
<div class="end"><big-tab class="act"><span>D</span>${icon('close',20)}</big-tab><mini-tab icon="qsearch" last>5</mini-tab><div class="rest">${icon('plus',24)}${icon('chev',22)}</div></div></div>
<omni-box slot="tools" host="webportal.courts.oregon.gov" value="webportal.courts.oregon.gov/portal/Home/WorkspaceMode?p=0"><ui-icon slot="lead" name="lock" w="18" h="22"></ui-icon><icon-button label="Share">${icon('share',28,30)}</icon-button><icon-button label="Bookmark">${icon('star')}</icon-button></omni-box>
<span slot="tools" class="gap"></span>
<icon-button slot="tools">${icon('hext',24,30)}</icon-button>
<icon-button slot="tools">${icon('dropper',30)}<span class="badge dot"></span></icon-button>
<icon-button slot="tools">${icon('photos')}</icon-button>
<icon-button slot="tools">${icon('news',34,26)}</icon-button>
<icon-button slot="tools">${icon('snagext')}<span class="badge new">New</span></icon-button>
<icon-button slot="tools">${icon('palm',34)}</icon-button>
<icon-button slot="tools">${icon('puzzle')}</icon-button>
<icon-button slot="tools">${icon('panel',28)}</icon-button>
<icon-button slot="tools"><span class="avatar">D</span></icon-button>
<button slot="tools" class="update">Update${icon('dots',8,28)}</button>
${marks.map(mark).join('')}
<span slot="marks" class="more">»</span><span slot="marks" class="rule"></span>${mark(['folder','Other Bookmarks'])}
<portal-page></portal-page><download-shelf></download-shelf>
</browser-window>
</div>
<mac-dock></mac-dock>`);
</script>
</body>
</html>
